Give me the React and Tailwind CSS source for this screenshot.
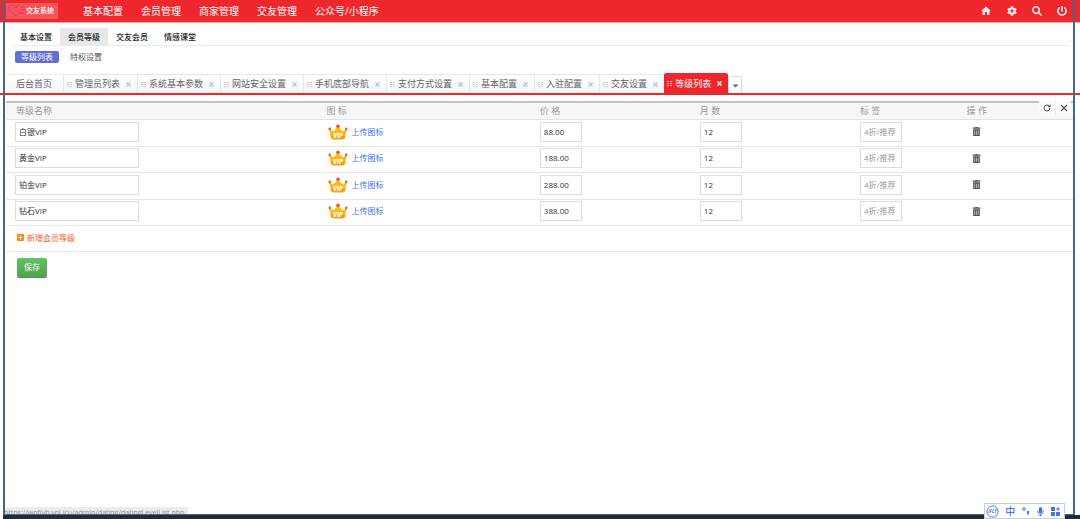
import { useState } from 'react'
import { FaCog, FaSearch, FaPowerOff, FaTrashAlt, FaCaretDown, FaMicrophone } from 'react-icons/fa'
import { MdHome } from 'react-icons/md'
import { RotateCw, X } from 'lucide-react'

const MAIN_MENU = ['基本配置', '会员管理', '商家管理', '交友管理', '公众号/小程序']
const SUB_MENU = ['基本设置', '会员等级', '交友会员', '情感课堂']
const TABS = [
  '管理员列表',
  '系统基本参数',
  '网站安全设置',
  '手机底部导航',
  '支付方式设置',
  '基本配置',
  '入驻配置',
  '交友设置',
  '等级列表',
]
const ACTIVE_TAB = '等级列表'
const LEVELS = [
  { id: 1, name: '白银VIP', price: '88.00', months: '12' },
  { id: 2, name: '黄金VIP', price: '188.00', months: '12' },
  { id: 3, name: '铂金VIP', price: '288.00', months: '12' },
  { id: 4, name: '钻石VIP', price: '388.00', months: '12' },
]

function HeartLogo() {
  return (
    <svg viewBox="0 0 18 14" className="h-3.5 w-[18px]" fill="none" stroke="#f0306a" strokeWidth="1">
      <path d="M8 12C4 9.500 1 7 1 4.200 1 2 2.500 1 4 1s3 1 4 3c.8-2 2-2.800 3.200-2.800" />
      <path d="M8 12c2-1.300 3.600-2.600 4.800-4M12 3h4M13 6h3.500M12 9h4" />
    </svg>
  )
}

function Crown() {
  return (
    <svg viewBox="0 0 20 16" className="h-4 w-5 shrink-0">
      <path
        d="M1.500 5.500 5.500 7.500 10 2.500 14.500 7.500l4-2-1.500 8Q16.500 15.200 14.500 15.200h-9Q3.500 15.200 3 13.500Z"
        fill="#ffb90f"
        stroke="#ffeeb0"
        strokeWidth="1"
        paintOrder="stroke"
      />
      <path d="M2.700 12q7-2.500 14.600 0l-.3 1.500Q16.500 15.200 14.500 15.200h-9Q3.500 15.200 3 13.500Z" fill="#ff9a0a" />
      <circle cx="10" cy="2.300" r="1.800" fill="#f04a3e" />
      <circle cx="1.800" cy="5" r="1.400" fill="#f0603e" />
      <circle cx="18.200" cy="5" r="1.400" fill="#f0603e" />
      <text x="10" y="13.500" textAnchor="middle" fontSize="6" fontWeight="800" fontStyle="italic" fill="#fff" fontFamily="Open Sans">
        VIP
      </text>
    </svg>
  )
}

function Grip({ className }) {
  return (
    <svg viewBox="0 0 5 5" className={`h-[5px] w-[5px] ${className}`} fill="currentColor">
      <path d="M0 0h2v1H0zM3 0h2v1H3zM0 2h2v1H0zM3 2h2v1H3zM0 4h2v1H0zM3 4h2v1H3z" />
    </svg>
  )
}

function TopBar() {
  return (
    <header className="flex h-[23px] items-center border-b border-[#f8a5a7] bg-[#ee272c] pr-[13px] pl-1.5 text-white">
      <a href="#" className="flex h-4 w-[52px] items-center bg-[#f5555a] pl-0.5 text-[7px] font-medium whitespace-nowrap">
        <HeartLogo />
        交友系统
      </a>
      <nav className="ml-[25px] flex flex-1 gap-[18px] text-[10px]">
        {MAIN_MENU.map((item) => (
          <a key={item} href="#" className="whitespace-nowrap">{item}</a>
        ))}
      </nav>
      <div className="flex items-center gap-[15px] text-[#fbe9e9]">
        <button aria-label="首页"><MdHome className="size-3" /></button>
        <button aria-label="设置"><FaCog className="size-2.5" /></button>
        <button aria-label="搜索"><FaSearch className="size-2.5" /></button>
        <button aria-label="退出"><FaPowerOff className="size-2.5" /></button>
      </div>
    </header>
  )
}

function SubMenu() {
  return (
    <div className="mr-[11px] ml-3 pt-[5px] text-[8px]">
      <nav className="flex border-b border-[#ebebeb] font-medium text-[#222]">
        {SUB_MENU.map((item) => (
          <a
            key={item}
            href="#"
            className={`flex h-[17px] items-center px-2 ${item === '会员等级' ? 'bg-[#e8e8e8]' : ''}`}
          >
            {item}
          </a>
        ))}
      </nav>
      <nav className="mt-[5px] flex items-center gap-[11px] pl-[3px]">
        <a href="#" className="flex h-3 items-center rounded-xs bg-[#5f6fd6] px-1.5 text-white">等级列表</a>
        <a href="#" className="text-[#555]">特权设置</a>
      </nav>
    </div>
  )
}

function TabBar() {
  return (
    <div className="mt-2.5 flex h-[22px] items-end border-b-2 border-[#ee272c] pl-1.5 text-[9px] text-[#666]">
      <a href="#" className="flex h-[19px] w-[57px] items-center rounded-t-xs border-t border-[#ececec] bg-linear-to-b from-white to-[#f3f6f6] pl-2.5">
        后台首页
      </a>
      {TABS.map((tab) => {
        const active = tab === ACTIVE_TAB
        return (
          <div
            key={tab}
            className={`flex items-center pr-[5px] pl-[3px] whitespace-nowrap ${
              active
                ? 'h-5 rounded-t-xs bg-[#ee272c] pt-px text-white'
                : 'h-[19px] border-t border-l border-[#e6e6e6] bg-linear-to-b from-white to-[#f3f6f6]'
            }`}
          >
            <Grip className={active ? 'text-[#fbb]' : 'text-[#ccc]'} />
            <a href="#" className="ml-[3px]">{tab}</a>
            <button aria-label={`关闭${tab}`} className={`ml-[5px] ${active ? 'text-white' : 'text-[#a9c6ea]'}`}>
              <X className="size-[7px]" strokeWidth={4} />
            </button>
          </div>
        )
      })}
      <button aria-label="更多标签" className="flex h-[17px] w-3.5 items-center justify-center rounded-t-xs border border-b-0 border-[#ddd] bg-white">
        <FaCaretDown className="size-[9px]" />
      </button>
    </div>
  )
}

const INPUT = 'block h-5 border border-[#ddd] bg-white px-[3px] pb-px text-[8px] text-[#333] outline-none placeholder:text-[#999]'

function LevelRow({ level }) {
  return (
    <tr className="border-b border-[#e6e6e6] odd:h-[27px] even:h-[26px] *:pb-0.5">
      <td className="pl-[9px]">
        <input aria-label="等级名称" defaultValue={level.name} className={`${INPUT} w-[124px]`} />
      </td>
      <td className="pl-[13px]">
        <div className="flex items-center gap-[3px]">
          <Crown />
          <button type="button" className="text-[8px] text-[#3b74e8]">上传图标</button>
        </div>
      </td>
      <td className="pl-[11px]">
        <input aria-label="价格" defaultValue={level.price} className={`${INPUT} w-[42px]`} />
      </td>
      <td className="pl-[11px]">
        <input aria-label="月数" defaultValue={level.months} className={`${INPUT} w-[42px]`} />
      </td>
      <td className="pl-[11px]">
        <input aria-label="标签" placeholder="4折/推荐" className={`${INPUT} w-[42px]`} />
      </td>
      <td className="pl-4">
        <button type="button" aria-label="删除" className="block text-[#555]"><FaTrashAlt className="size-[9px]" /></button>
      </td>
    </tr>
  )
}

function LevelForm() {
  const [levels] = useState(LEVELS)

  return (
    <form className="relative mt-1.5 mr-[7px] ml-1.5" onSubmit={(e) => e.preventDefault()}>
      <table className="w-full table-fixed border-collapse">
        <thead>
          <tr className="h-[17px] border-t-2 border-b border-t-[#c2c2c2] border-b-[#e3e3e3] bg-[#f6f7f7] text-left text-[9px] leading-[14px] text-[#999] *:font-normal">
            <th className="w-[29%] pl-2.5">等级名称</th>
            <th className="w-[20%] pl-[11px]">图 标</th>
            <th className="w-[15%] pl-[11px]">价 格</th>
            <th className="w-[15%] pl-[11px]">月 数</th>
            <th className="w-[10%] pl-[11px]">标 签</th>
            <th className="w-[11%] pl-[11px]">操 作</th>
          </tr>
        </thead>
        <tbody>
          {levels.map((level) => (
            <LevelRow key={level.id} level={level} />
          ))}
        </tbody>
      </table>

      <div className="flex h-[26px] items-center border-b border-[#e6e6e6] pb-px pl-[11px]">
        <button type="button" className="flex items-center gap-[3px] text-[8px] text-[#ff5a1f]">
          <svg viewBox="0 0 7 7" className="size-[7px]">
            <rect width="7" height="7" rx="1" fill="#f98a0c" />
            <path d="M3 1.500h1V3h1.500v1H4v1.500H3V4H1.500V3H3z" fill="#fff" />
          </svg>
          新增会员等级
        </button>
      </div>
      <button className="mt-1.5 ml-[11px] h-5 w-[30px] rounded-xs border-b border-[#4a964a] bg-linear-to-b from-[#62c462] to-[#51a351] text-[8px] text-white">
        保存
      </button>

      <div className="absolute top-0 right-0.5 flex bg-[#fafafa] text-[#555]">
        <button type="button" aria-label="刷新" className="flex h-3.5 w-4 items-center justify-center">
          <RotateCw className="size-2" strokeWidth={3} />
        </button>
        <button type="button" aria-label="关闭" className="flex h-3.5 w-4 items-center justify-center border-l border-[#eee]">
          <X className="size-2.5" strokeWidth={3} />
        </button>
      </div>
    </form>
  )
}

function ImeBar() {
  return (
    <div className="absolute right-[15px] bottom-0 flex h-4 w-[81px] items-center justify-between border border-[#ccc] bg-white pr-1 pl-px text-[#3f78ee]">
      <svg viewBox="0 0 13 13" className="size-[13px]">
        <circle cx="6.500" cy="6.500" r="5.600" fill="none" stroke="currentColor" />
        <text x="6.500" y="8.300" textAnchor="middle" fontSize="4.500" fontWeight="700" fontStyle="italic" fill="currentColor" fontFamily="Open Sans">iFLY</text>
      </svg>
      <span className="text-[10px] leading-none font-medium">中</span>
      <svg viewBox="0 0 8 8" className="size-2">
        <circle cx="2" cy="2" r="1.300" fill="none" stroke="currentColor" />
        <path d="M5 4h2.200v2L6 8H5l.6-2H5z" fill="currentColor" />
      </svg>
      <FaMicrophone className="size-[9px]" />
      <svg viewBox="0 0 9 9" className="size-[9px]" fill="currentColor">
        <path d="M0 0h4v4H0zM0 5h4v4H0zM5 5h4v4H5zM6.500 0h1v1.500H9v1H7.500V4h-1V2.500H5v-1h1.500z" />
      </svg>
    </div>
  )
}

// browser window edges, status text and taskbar sit over the page
function WindowFrame() {
  return (
    <>
      <div className="absolute bottom-0 left-1 h-3 rounded-tr-xs bg-[#ebebeb] pr-1 text-[7px] leading-3 whitespace-nowrap text-[#8a8a8a]">
        https://wpfivb.vol.icu/admin/dating/datingLevelList.php
      </div>
      <div className="pointer-events-none absolute top-0 right-[5px] bottom-1 left-[3px] border-x-2 border-b border-[#42698c]" />
      <div className="absolute right-0 bottom-0 left-[3px] h-1 bg-[#232c35]" />
      <ImeBar />
    </>
  )
}

export default function App() {
  return (
    <div className="relative min-h-screen overflow-hidden bg-white font-['Open_Sans','Noto_Sans_CJK_SC',sans-serif]">
      <TopBar />
      <SubMenu />
      <TabBar />
      <LevelForm />
      <WindowFrame />
    </div>
  )
}
